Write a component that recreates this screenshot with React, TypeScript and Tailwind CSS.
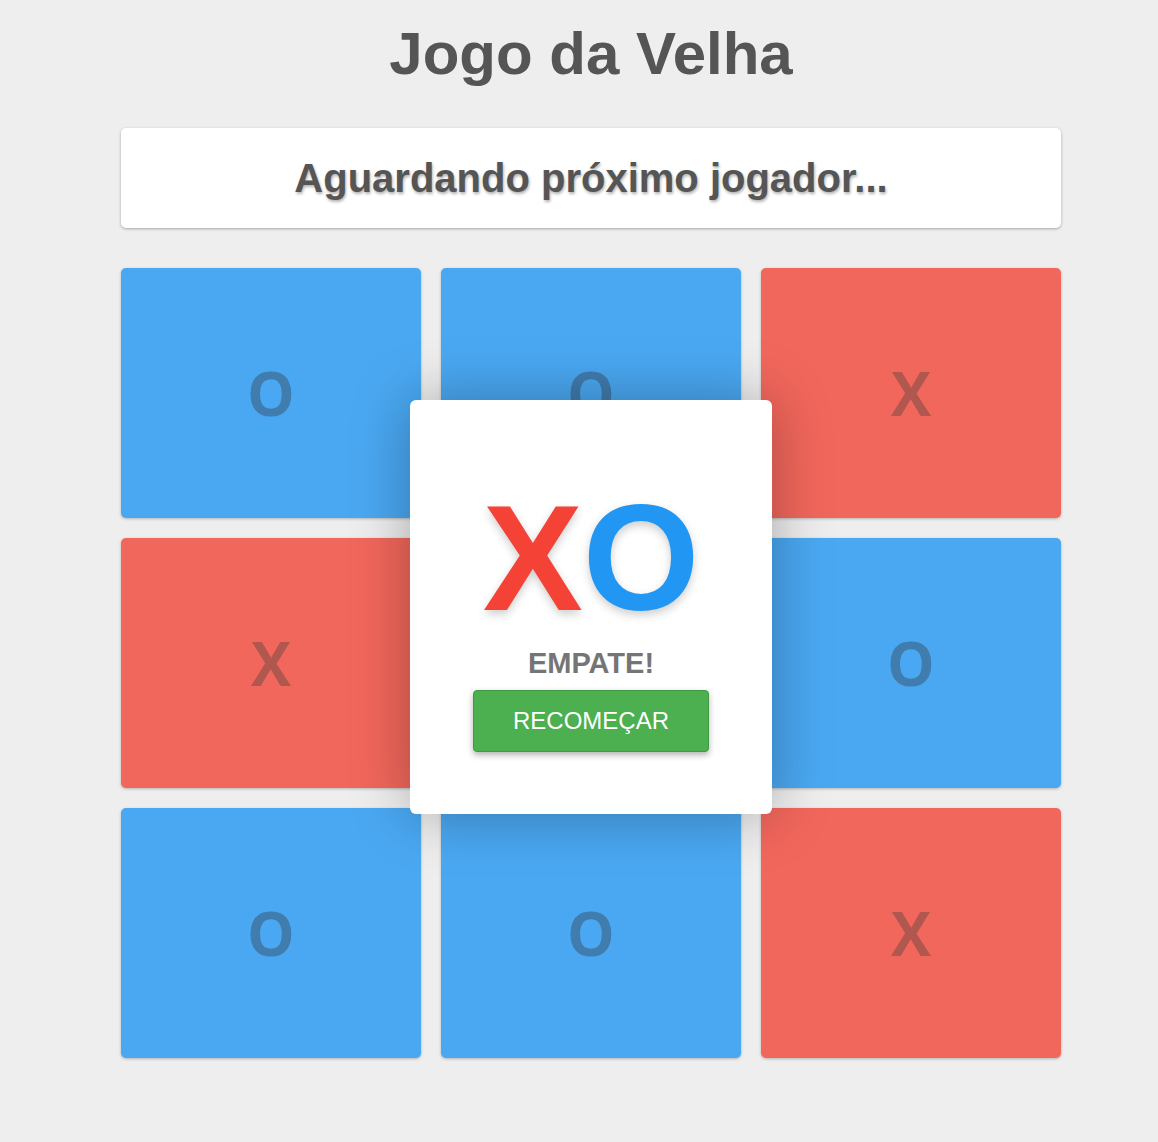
const board = ["O", "O", "X", "X", "O", "O", "O", "O", "X"];

function Cell({ value }: { value: string }) {
  const isX = value === "X";
  return (
    <div
      className={`flex h-[250px] items-center justify-center rounded-[5px] shadow-[0_1px_3px_rgba(0,0,0,0.25)] ${
        isX ? "bg-[#f2675c] text-[#b05850]" : "bg-[#4aa8f2] text-[#407cae]"
      }`}
    >
      <span className="font-['Open_Sans',sans-serif] text-[60px] font-bold leading-none">{value}</span>
    </div>
  );
}

export default function App() {
  return (
    <div className="min-h-[1142px] bg-[#eeeeee] font-['Liberation_Sans',Arial,sans-serif]">
      <div className="ml-[121px] w-[940px] pt-[18px]">
        <h1 className="text-center text-[60px] font-bold leading-[72px] text-[#555555]">Jogo da Velha</h1>
        <div className="mt-[38px] flex h-[100px] items-center justify-center rounded-[5px] bg-white shadow-[0_1px_3px_rgba(0,0,0,0.3)]">
          <p className="text-[40px] font-bold text-[#555555] [text-shadow:1px_2px_3px_rgba(0,0,0,0.3)]">
            Aguardando próximo jogador...
          </p>
        </div>
        <div className="relative mt-[40px]">
          <div className="grid grid-cols-3 gap-5">
            {board.map((v, i) => (
              <Cell key={i} value={v} />
            ))}
          </div>
          <div className="absolute left-[289px] top-[132px] flex h-[414px] w-[362px] flex-col items-center rounded-[6px] bg-white pt-[83px] shadow-[0_0_60px_rgba(0,0,0,0.3)]">
            <div className="text-[150px] font-bold leading-none [text-shadow:0_4px_10px_rgba(0,0,0,0.2)]">
              <span className="text-[#f44336]">X</span>
              <span className="text-[#2196f3]">O</span>
            </div>
            <p className="mt-[16px] text-[29px] font-bold leading-none text-[#757575]">EMPATE!</p>
            <button className="mt-[12px] h-[62px] w-[236px] rounded-[4px] border border-[#3e9a42] bg-[#4caf50] text-[24px] text-white shadow-[0_3px_6px_rgba(0,0,0,0.3)]">
              RECOMEÇAR
            </button>
          </div>
        </div>
      </div>
    </div>
  );
}
